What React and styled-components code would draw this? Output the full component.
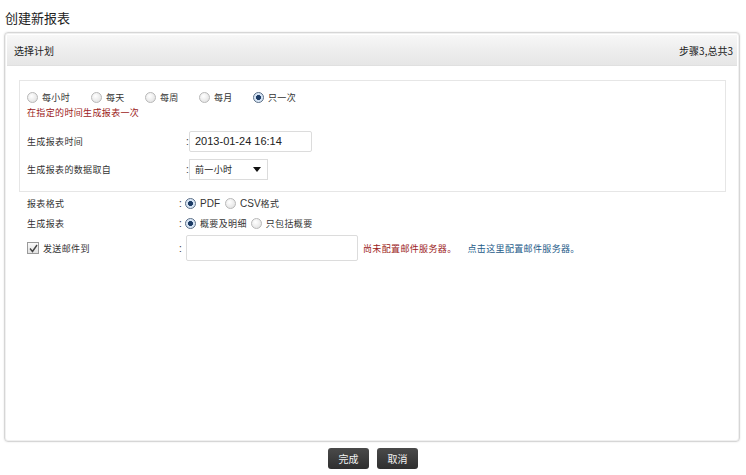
import React from "react";
import styled, { createGlobalStyle } from "styled-components";

const Global = createGlobalStyle`
  html, body { margin: 0; padding: 0; background: #fff; }
  body {
    font-family: "Liberation Sans", "Noto Sans CJK SC", sans-serif;
    font-size: 11px;
    color: #333;
  }
`;

const Page = styled.div`
  width: 746px;
  height: 475px;
  box-sizing: border-box;
  padding: 0 6px 0 4px;
`;

const Title = styled.h1`
  margin: 0;
  height: 32px;
  padding-left: 1px;
  font-size: 13px;
  font-weight: normal;
  line-height: 35px;
  color: #222;
  font-family: "Noto Sans CJK SC", sans-serif;
`;

const Panel = styled.div`
  height: 410px;
  box-sizing: border-box;
  border: 1px solid #d6d6d6;
  border-radius: 4px;
  box-shadow: 0 0 2px rgba(0, 0, 0, 0.12), inset 0 0 0 1px #f0f0f0;
  padding: 2px;
`;

const PanelHead = styled.div`
  height: 30px;
  display: flex;
  align-items: center;
  justify-content: space-between;
  padding: 0 4px 0 7px;
  background: linear-gradient(#f7f7f7, #ececec 60%, #e6e6e6);
  border-bottom: 1px solid #e0e0e0;
  font-family: "Noto Sans CJK SC", sans-serif;
  font-size: 10px;
  color: #222;
`;

const PanelBody = styled.div`
  padding: 14px 11px 0 12px;
`;

const Fieldset = styled.div`
  border: 1px solid #e6e6e6;
  padding: 8px 8px 8px 7px;
`;

const RadioRow = styled.div`
  display: flex;
  align-items: center;
  height: 16px;
`;

const cjk = `
  font-family: "Noto Sans CJK SC", sans-serif;
  font-size: 9px;
  letter-spacing: 0.35px;
`;

const RadioItem = styled.label`
  display: flex;
  align-items: center;
  gap: 4px;
  width: ${(p) => p.w || 54}px;
  ${cjk}
  color: #333;
`;

const Radio = styled.span`
  box-sizing: border-box;
  width: 11px;
  height: 11px;
  border-radius: 50%;
  flex: none;
  border: 1px solid ${(p) => (p.on ? "#5a6e86" : "#b8b8b8")};
  background: ${(p) =>
    p.on
      ? "radial-gradient(circle, #1d3c66 0 2.2px, #cfe0f3 2.8px, #eef4fb 100%)"
      : "radial-gradient(circle at 40% 35%, #ffffff, #dcdcdc)"};
`;

const Hint = styled.div`
  color: #9b1a1a;
  ${cjk}
  line-height: 14px;
  margin: 1px 0 7px;
`;

const Row = styled.div`
  display: flex;
  align-items: center;
  height: ${(p) => p.h || 28}px;
  margin-top: ${(p) => p.mt || 0}px;
`;

const Label = styled.div`
  width: ${(p) => p.w}px;
  display: flex;
  align-items: center;
  gap: 4px;
  ${cjk}
  color: #333;
`;

const Colon = styled.span`
  width: ${(p) => p.w || 6}px;
  font-size: 10px;
  color: #333;
`;

const TextInput = styled.div`
  box-sizing: border-box;
  width: ${(p) => p.w}px;
  height: ${(p) => p.h}px;
  border: 1px solid #dcdcdc;
  border-radius: 2px;
  padding-left: 5px;
  display: flex;
  align-items: center;
  font-size: 11px;
  color: #222;
  background: #fff;
`;

const Select = styled.div`
  box-sizing: border-box;
  width: 79px;
  height: 21px;
  border: 1px solid #dcdcdc;
  display: flex;
  align-items: center;
  justify-content: space-between;
  padding: 0 6px 0 5px;
  ${cjk}
  color: #222;
`;

const Caret = styled.span`
  width: 0;
  height: 0;
  border-left: 4px solid transparent;
  border-right: 4px solid transparent;
  border-top: 5px solid #111;
  margin-top: 1px;
`;

const Options = styled.div`
  display: flex;
  align-items: center;
  gap: 4px;
  font-size: 10px;
  font-family: "Liberation Sans", "Noto Sans CJK SC", sans-serif;
`;

const OptText = styled.span`
  ${cjk}
  margin-right: ${(p) => p.mr || 0}px;
`;

const Check = styled.span`
  box-sizing: border-box;
  width: 12px;
  height: 12px;
  border: 1px solid #9a9a9a;
  background: linear-gradient(#fafafa, #e2e2e2);
  display: inline-flex;
  align-items: center;
  justify-content: center;
`;

const Note = styled.span`
  margin-left: ${(p) => p.ml || 0}px;
  ${cjk}
  color: ${(p) => p.c};
`;

const Footer = styled.div`
  display: flex;
  justify-content: center;
  gap: 8px;
  padding-top: 6px;
  padding-left: 2px;
`;

const Button = styled.button`
  width: 41px;
  height: 21px;
  border: none;
  border-radius: 3px;
  background: linear-gradient(#4a4a4a, #2f2f2f);
  color: #f2f2f2;
  font-family: "Noto Sans CJK SC", sans-serif;
  font-size: 10px;
  padding: 0;
`;

const Lower = styled.div`
  padding-left: 8px;
`;

export default function App() {
  const freq = [
    ["每小时", 64],
    ["每天", 54],
    ["每周", 54],
    ["每月", 54],
    ["只一次", 60],
  ];
  return (
    <Page>
      <Global />
      <Title>创建新报表</Title>
      <Panel>
        <PanelHead>
          <span>选择计划</span>
          <span>步骤3,总共3</span>
        </PanelHead>
        <PanelBody>
          <Fieldset>
            <RadioRow>
              {freq.map(([t, w], i) => (
                <RadioItem key={t} w={w}>
                  <Radio on={i === 4} />
                  {t}
                </RadioItem>
              ))}
            </RadioRow>
            <Hint>在指定的时间生成报表一次</Hint>
            <Row h={28}>
              <Label w={159}>生成报表时间</Label>
              <Colon w={3}>:</Colon>
              <TextInput w={123} h={21}>2013-01-24 16:14</TextInput>
            </Row>
            <Row h={28}>
              <Label w={159}>生成报表的数据取自</Label>
              <Colon w={3}>:</Colon>
              <Select>
                前一小时
                <Caret />
              </Select>
            </Row>
          </Fieldset>
          <Lower>
            <Row h={20} mt={1}>
              <Label w={152}>报表格式</Label>
              <Colon>:</Colon>
              <Options>
                <Radio on />
                <span style={{ marginRight: 1 }}>PDF</span>
                <Radio />
                <span>
                  CSV<OptText>格式</OptText>
                </span>
              </Options>
            </Row>
            <Row h={20}>
              <Label w={152}>生成报表</Label>
              <Colon>:</Colon>
              <Options>
                <Radio on />
                <OptText>概要及明细</OptText>
                <Radio />
                <OptText>只包括概要</OptText>
              </Options>
            </Row>
            <Row h={30}>
              <Label w={152}>
                <Check>
                  <svg width="9" height="9" viewBox="0 0 9 9">
                    <path d="M1 4.5 L3.5 7.5 L8 1" stroke="#444" strokeWidth="1.4" fill="none" />
                  </svg>
                </Check>
                发送邮件到
              </Label>
              <Colon w={7}>:</Colon>
              <TextInput w={172} h={26} />
              <Note c="#9b1a1a" ml={5}>尚未配置邮件服务器。</Note>
              <Note c="#1d5a88" ml={11}>点击这里配置邮件服务器。</Note>
            </Row>
          </Lower>
        </PanelBody>
      </Panel>
      <Footer>
        <Button>完成</Button>
        <Button>取消</Button>
      </Footer>
    </Page>
  );
}
